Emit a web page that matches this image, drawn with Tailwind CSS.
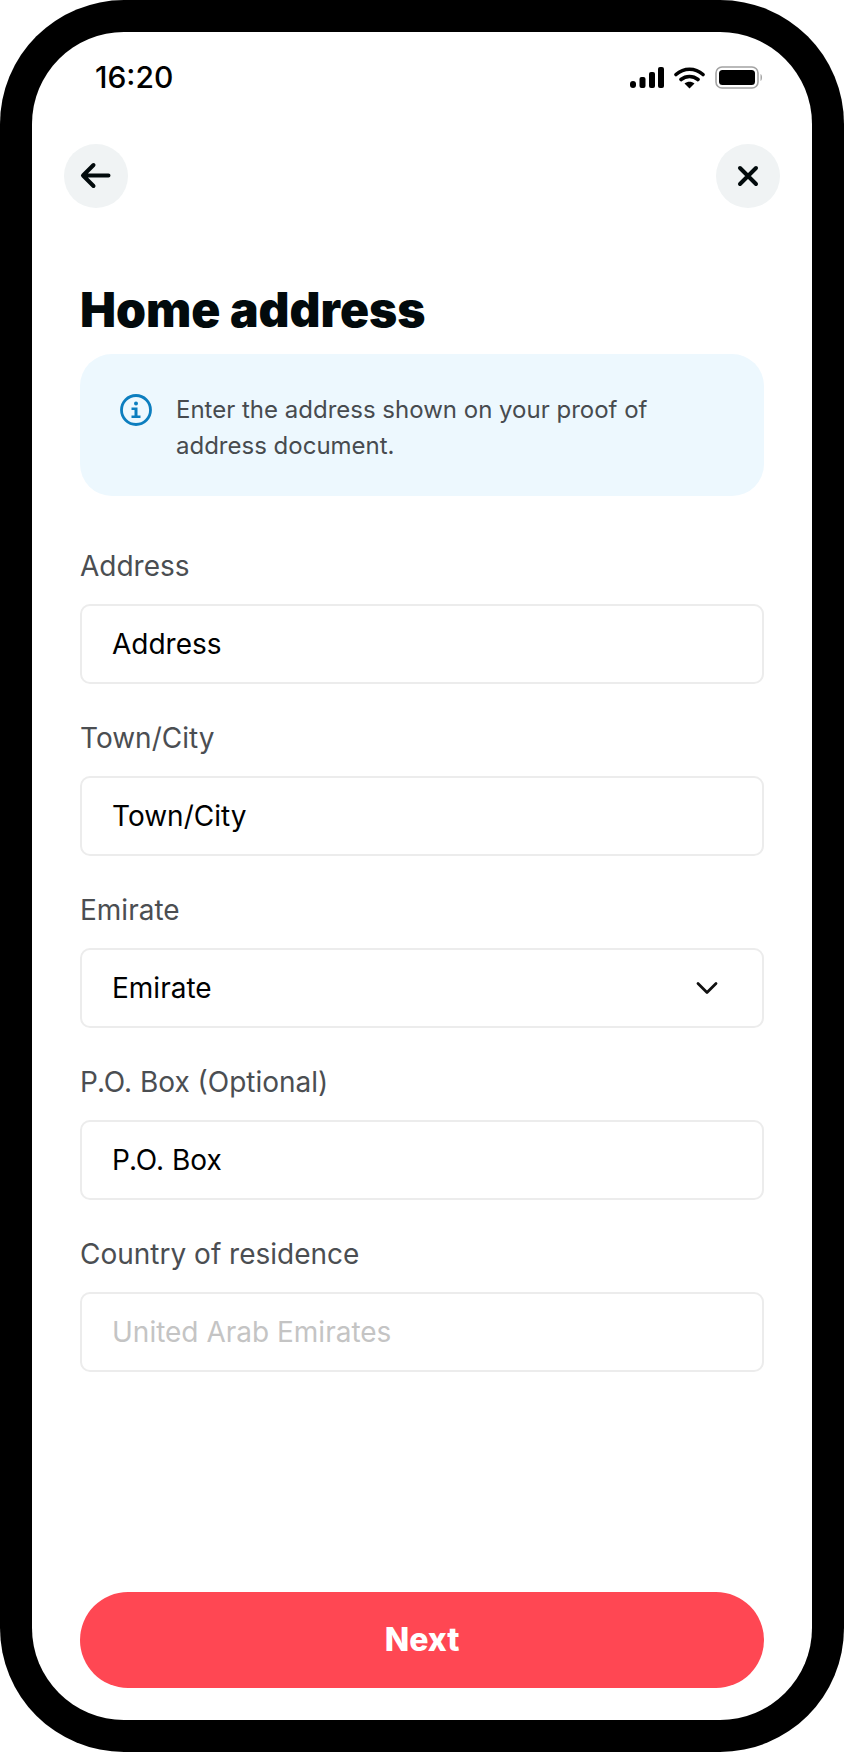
<!doctype html>
<html>
<head>
<meta charset="utf-8">
<script src="https://cdn.jsdelivr.net/npm/@tailwindcss/browser@4"></script>
</head>
<body class="bg-white font-['Inter',sans-serif]">
<div class="w-[844px] h-[1752px] bg-black rounded-[124px] p-8">
  <div class="w-[780px] h-[1688px] bg-white rounded-[92px] flex flex-col">
    <div class="h-[98px] shrink-0 flex items-start justify-between pl-[63px] pr-[48px] pt-[27px]">
      <span class="text-[30px] leading-[36px] font-medium text-black">16:20</span>
      <div class="flex items-center gap-[10px] mt-[7px]">
        <svg width="34" height="22" viewBox="0 0 34 22"><rect x="0" y="14" width="6" height="7" rx="3" fill="#000"/><rect x="9.500" y="10" width="6" height="11" rx="2" fill="#000"/><rect x="19" y="5" width="6" height="16" rx="2" fill="#000"/><rect x="28" y="0" width="6" height="21" rx="2" fill="#000"/></svg>
        <svg width="31" height="23" viewBox="0 0 31 23"><path d="M2 8.500C10 1.500 21 1.500 29 8.500M7 13.500C12 9.500 19 9.500 24 13.500" fill="none" stroke="#000" stroke-width="3.600" stroke-linecap="round"/><path d="M10.500 17.500C13.500 15 17.500 15 20.500 17.500L15.500 22.500Z" fill="#000"/></svg>
        <svg width="49" height="23" viewBox="0 0 49 23"><rect x="1" y="1" width="42" height="21" rx="6" fill="none" stroke="#a3a3a3" stroke-width="1.600"/><rect x="4" y="4" width="36" height="15" rx="3.500" fill="#000"/><path d="M45.500 8C47.500 8.500 47.500 14.500 45.500 15Z" fill="#a3a3a3"/></svg>
      </div>
    </div>
    <div class="h-16 mt-[14px] shrink-0 flex justify-between pl-8 pr-8">
      <div class="w-16 h-16 rounded-full bg-[#f0f3f4] flex items-center justify-center">
        <svg width="32" height="32" viewBox="0 0 32 32" fill="none" stroke="#020a0c" stroke-width="4" stroke-linecap="round" stroke-linejoin="round"><path d="M28.500 15.500H3.500M13.500 5L3 15.500L13.500 26"/></svg>
      </div>
      <div class="w-16 h-16 rounded-full bg-[#f0f3f4] flex items-center justify-center">
        <svg width="22" height="22" viewBox="0 0 22 22" fill="none" stroke="#020a0c" stroke-width="4" stroke-linecap="round"><path d="M3 3L19 19M19 3L3 19"/></svg>
      </div>
    </div>
    <div class="flex-1 flex flex-col px-12 pb-8">
      <h1 class="mt-[74px] text-[48px] leading-[56px] font-black text-[#020a0c]">Home address</h1>
      <div class="mt-4 h-[142px] rounded-[32px] bg-[#edf8fe] flex items-start gap-6 pl-10 pr-16 pt-[38px]">
        <svg class="shrink-0 mt-[2px]" width="32" height="32" viewBox="0 0 32 32"><circle cx="16" cy="16" r="14.500" fill="none" stroke="#0c7ebf" stroke-width="2.800"/><circle cx="16" cy="9.500" r="2" fill="#0c7ebf"/><path d="M11.500 13.500H17.500V21.500H20.500V24H11.500V21.500H14.500V16H11.500Z" fill="#0c7ebf"/></svg>
        <p class="text-[24px] leading-[36px] text-[#474b4f]">Enter the address shown on your proof of address document.</p>
      </div>
      <div class="mt-[52px] flex flex-col gap-9">
        <div>
          <div class="text-[28px] leading-[36px] text-[#4b4e52] mb-5">Address</div>
          <div class="h-20 rounded-[10px] border-2 border-[#ececec] flex items-center px-[30px] text-[28px] text-black">Address</div>
        </div>
        <div>
          <div class="text-[28px] leading-[36px] text-[#4b4e52] mb-5">Town/City</div>
          <div class="h-20 rounded-[10px] border-2 border-[#ececec] flex items-center px-[30px] text-[28px] text-black">Town/City</div>
        </div>
        <div>
          <div class="text-[28px] leading-[36px] text-[#4b4e52] mb-5">Emirate</div>
          <div class="h-20 rounded-[10px] border-2 border-[#ececec] flex items-center justify-between pl-[30px] pr-[44px] text-[28px] text-black">
            <span>Emirate</span>
            <svg width="22" height="14" viewBox="0 0 22 14" fill="none" stroke="#111" stroke-width="2.800" stroke-linecap="round" stroke-linejoin="round"><path d="M2 2.500L11 11.500L20 2.500"/></svg>
          </div>
        </div>
        <div>
          <div class="text-[28px] leading-[36px] text-[#4b4e52] mb-5">P.O. Box (Optional)</div>
          <div class="h-20 rounded-[10px] border-2 border-[#ececec] flex items-center px-[30px] text-[28px] text-black">P.O. Box</div>
        </div>
        <div>
          <div class="text-[28px] leading-[36px] text-[#4b4e52] mb-5">Country of residence</div>
          <div class="h-20 rounded-[10px] border-2 border-[#ececec] flex items-center px-[30px] text-[28px] text-[#c4c4c4]">United Arab Emirates</div>
        </div>
      </div>
      <button class="mt-auto h-24 rounded-full bg-[#ff4753] text-white text-[32px] font-extrabold">Next</button>
    </div>
  </div>
</div>
</body>
</html>
